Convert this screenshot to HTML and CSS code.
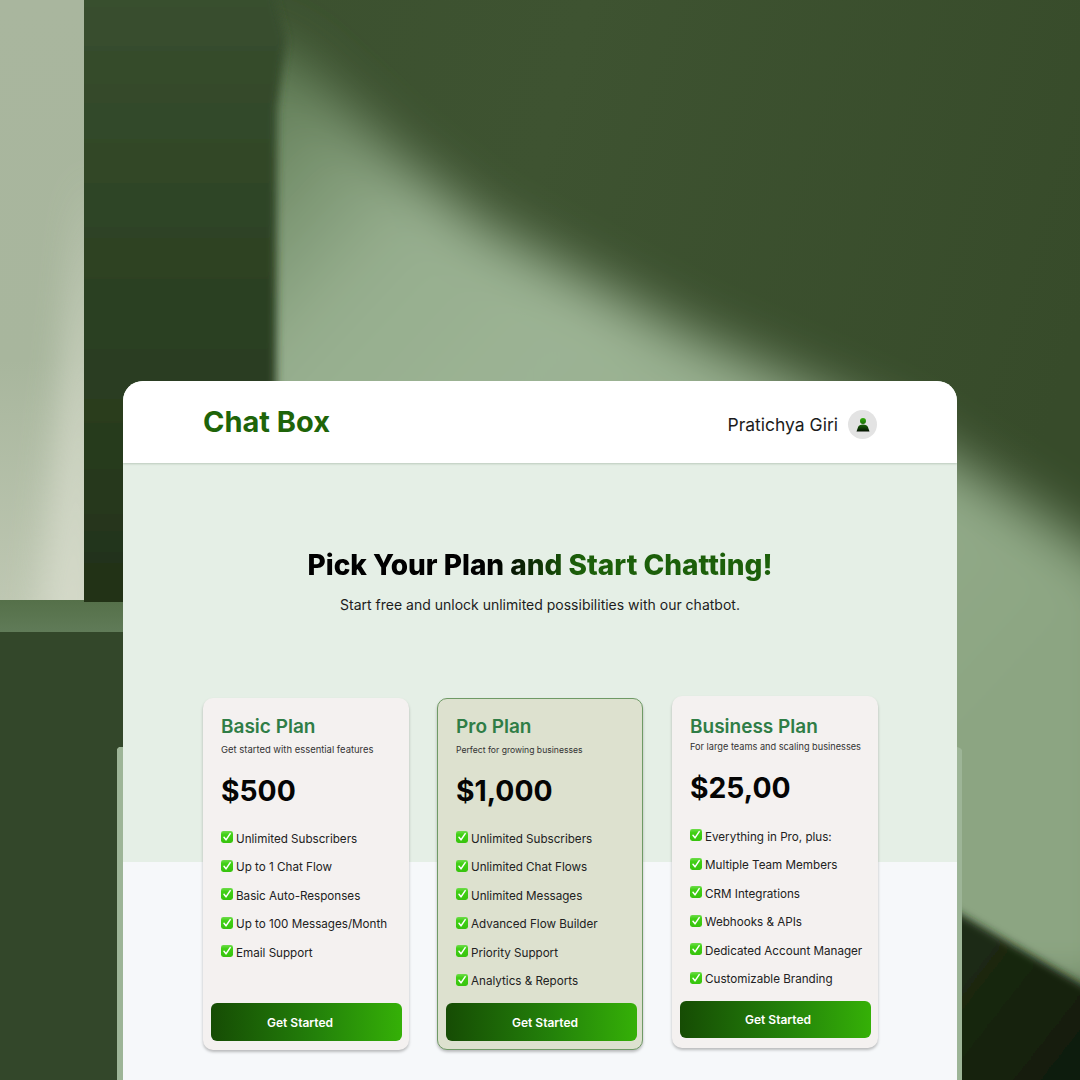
FILE: index.html
```html
<!DOCTYPE html>
<html lang="en">
<head>
  <meta charset="UTF-8" />
  <meta name="viewport" content="width=device-width, initial-scale=1.0"/>
  <title>Chat Box</title>
  <link rel="stylesheet" href="styles.css">
</head>
<body>

<svg class="backdrop" viewBox="0 0 1080 1080" aria-hidden="true">
  <defs>
    <linearGradient id="base" x1="0" y1="0" x2="1" y2="0.3">
      <stop offset="0" stop-color="#3a4f2e"/>
      <stop offset="0.5" stop-color="#3e5331"/>
      <stop offset="1" stop-color="#374b2a"/>
    </linearGradient>
    <linearGradient id="beam" gradientUnits="userSpaceOnUse" x1="290" y1="40" x2="1000" y2="700">
      <stop offset="0" stop-color="#5f7b54"/>
      <stop offset="0.22" stop-color="#96ae8e"/>
      <stop offset="0.42" stop-color="#9cb394"/>
      <stop offset="1" stop-color="#8ca582"/>
    </linearGradient>
    <linearGradient id="shade" x1="0" y1="0" x2="0" y2="1">
      <stop offset="0" stop-color="#3a5030"/>
      <stop offset="0.3" stop-color="#2f4526"/>
      <stop offset="0.7" stop-color="#27391d"/>
      <stop offset="1" stop-color="#1c2814"/>
    </linearGradient>
    <linearGradient id="wall" x1="0" y1="0" x2="0" y2="1">
      <stop offset="0" stop-color="#a9b69e"/>
      <stop offset="0.6" stop-color="#a8b69d"/>
      <stop offset="1" stop-color="#bec7b2"/>
    </linearGradient>
    <linearGradient id="band" x1="0" y1="0" x2="0" y2="1">
      <stop offset="0" stop-color="#557049"/>
      <stop offset="1" stop-color="#607b58"/>
    </linearGradient>
    <linearGradient id="corner" x1="0" y1="0" x2="1" y2="1">
      <stop offset="0" stop-color="#1f2e15"/>
      <stop offset="1" stop-color="#0d1808"/>
    </linearGradient>
    <clipPath id="wall-clip"><rect width="84" height="600"/></clipPath>
    <filter id="soft-lg" x="-20%" y="-20%" width="140%" height="140%"><feGaussianBlur stdDeviation="27"/></filter>
    <filter id="soft-md" x="-100%" y="-30%" width="300%" height="160%"><feGaussianBlur stdDeviation="18"/></filter>
    <filter id="soft-sm" x="-20%" y="-20%" width="140%" height="140%"><feGaussianBlur stdDeviation="4"/></filter>
  </defs>
  <rect width="1080" height="1080" fill="url(#base)"/>
  <polygon points="220,700 220,30 286,50 400,160 482,225 689,335 895,425 1033,510 1130,575 1130,1000 220,1000" fill="url(#beam)" filter="url(#soft-lg)"/>
  <polygon points="60,-20 270,-20 286,40 277,110 275,700 60,700" fill="url(#shade)" filter="url(#soft-sm)"/>
  <polygon points="950,908 1100,995 1100,1100 950,1100" fill="url(#corner)" filter="url(#soft-sm)"/>
  <polygon points="0,600 84,600 84,602 123,602 123,632 0,632" fill="url(#band)"/>
  <rect x="0" y="632" width="123" height="448" fill="#33472a"/>
  <g clip-path="url(#wall-clip)">
    <rect width="84" height="600" fill="url(#wall)"/>
    <polygon points="90,170 105,640 35,640" fill="#dadecf" opacity="0.8" filter="url(#soft-md)"/>
  </g>
  <polygon points="117,749 119,747 123,747 123,1080 117,1080" fill="#9db597"/>
  <polygon points="957,747 960,748 962,750 962,1080 957,1080" fill="#9db597"/>
</svg>

<div class="window">
  <header class="topbar">
    <div class="logo">Chat Box</div>
    <div class="user">
      <span class="user-name">Pratichya Giri</span>
      <span class="avatar">
        <svg width="14" height="15" viewBox="0 0 14 15">
          <defs>
            <linearGradient id="person" x1="0" y1="0" x2="0" y2="1">
              <stop offset="0" stop-color="#2fae08"/>
              <stop offset="0.45" stop-color="#1c6b08"/>
              <stop offset="1" stop-color="#031000"/>
            </linearGradient>
          </defs>
          <path fill="url(#person)" d="M7 1a3 3 0 1 1 0 6 3 3 0 0 1 0-6zM7 7.600c2.600 0 4.400 1 5 2.600l1.500 4.300H.5L2 10.200c.6-1.600 2.400-2.600 5-2.600z"/>
        </svg>
      </span>
    </div>
  </header>

  <main class="content">
    <h1 class="hero-title">Pick Your Plan and Start Chatting!</h1>
    <p class="hero-sub">Start free and unlock unlimited possibilities with our chatbot.</p>

    <svg width="0" height="0" class="sprite" aria-hidden="true">
      <defs>
        <linearGradient id="tick-fill" x1="0" y1="0" x2="0" y2="1">
          <stop offset="0" stop-color="#6fdc4c"/>
          <stop offset="0.3" stop-color="#41d015"/>
          <stop offset="1" stop-color="#37c30e"/>
        </linearGradient>
      </defs>
      <symbol id="check" viewBox="0 0 12 12">
        <rect width="12" height="12" rx="2.400" fill="url(#tick-fill)"/>
        <path d="M3 6.300 5 8.900 9.200 2.600" fill="none" stroke="#fff" stroke-width="1.500" stroke-linecap="round" stroke-linejoin="round"/>
      </symbol>
    </svg>

    <div class="plans">
      <section class="plan plan-basic">
        <h2 class="plan-name">Basic Plan</h2>
        <p class="plan-desc">Get started with essential features</p>
        <div class="plan-price">$500</div>
        <ul class="features">
          <li><svg class="tick"><use href="#check"/></svg>Unlimited Subscribers</li>
          <li><svg class="tick"><use href="#check"/></svg>Up to 1 Chat Flow</li>
          <li><svg class="tick"><use href="#check"/></svg>Basic Auto-Responses</li>
          <li><svg class="tick"><use href="#check"/></svg>Up to 100 Messages/Month</li>
          <li><svg class="tick"><use href="#check"/></svg>Email Support</li>
        </ul>
        <button class="cta">Get Started</button>
      </section>

      <section class="plan plan-pro">
        <h2 class="plan-name">Pro Plan</h2>
        <p class="plan-desc">Perfect for growing businesses</p>
        <div class="plan-price">$1,000</div>
        <ul class="features">
          <li><svg class="tick"><use href="#check"/></svg>Unlimited Subscribers</li>
          <li><svg class="tick"><use href="#check"/></svg>Unlimited Chat Flows</li>
          <li><svg class="tick"><use href="#check"/></svg>Unlimited Messages</li>
          <li><svg class="tick"><use href="#check"/></svg>Advanced Flow Builder</li>
          <li><svg class="tick"><use href="#check"/></svg>Priority Support</li>
          <li><svg class="tick"><use href="#check"/></svg>Analytics &amp; Reports</li>
        </ul>
        <button class="cta">Get Started</button>
      </section>

      <section class="plan plan-business">
        <h2 class="plan-name">Business Plan</h2>
        <p class="plan-desc">For large teams and scaling businesses</p>
        <div class="plan-price">$25,00</div>
        <ul class="features">
          <li><svg class="tick"><use href="#check"/></svg>Everything in Pro, plus:</li>
          <li><svg class="tick"><use href="#check"/></svg>Multiple Team Members</li>
          <li><svg class="tick"><use href="#check"/></svg>CRM Integrations</li>
          <li><svg class="tick"><use href="#check"/></svg>Webhooks &amp; APIs</li>
          <li><svg class="tick"><use href="#check"/></svg>Dedicated Account Manager</li>
          <li><svg class="tick"><use href="#check"/></svg>Customizable Branding</li>
        </ul>
        <button class="cta">Get Started</button>
      </section>
    </div>
  </main>
</div>

</body>
</html>
```

FILE: styles.css
```css
* { box-sizing: border-box; }
html, body {
  margin: 0;
  padding: 0;
  height: 1080px;
  overflow: hidden;
}
body {
  position: relative;
  font-family: Inter, "Liberation Sans", sans-serif;
  background: #34482a;
  color: #111;
  padding: 381px 123px 0;
}
.backdrop {
  position: absolute;
  left: 0;
  top: 0;
  width: 1080px;
  height: 1080px;
}
.sprite { position: absolute; }

.window {
  position: relative;
  width: 834px;
  height: 699px;
  border-radius: 20px 20px 0 0;
  overflow: hidden;
  background: linear-gradient(#e5efe6 481px, #f6f8fa 481px);
}
.topbar {
  height: 82px;
  padding: 0 80px;
  display: flex;
  align-items: center;
  justify-content: space-between;
  background: white;
  box-shadow: 0 1px 2px rgba(60,90,60,0.25);
}
.logo {
  padding-bottom: 1px;
  font-size: 29px;
  font-weight: 700;
  color: #1e6409;
}
.user {
  display: flex;
  align-items: center;
  gap: 10px;
  padding-top: 5px;
}
.user-name {
  font-size: 17.500px;
  color: #1c1c1c;
}
.avatar {
  width: 29px;
  height: 29px;
  border-radius: 50%;
  background: #e3e3e3;
  display: flex;
  align-items: center;
  justify-content: center;
}

.content { padding: 84px 80px 0; }
.hero-title {
  width: fit-content;
  margin: 0 auto;
  font-size: 28px;
  line-height: 36px;
  font-weight: 800;
  text-align: center;
  white-space: nowrap;
  background: linear-gradient(90deg, #000 0%, #000 40%, #1c5f0a 58%, #1c5f0a 100%);
  -webkit-background-clip: text;
  background-clip: text;
  color: transparent;
}
.hero-sub {
  margin: 12px 0 0;
  font-size: 14px;
  line-height: 20px;
  text-align: center;
  color: #1c1c1c;
}

.plans {
  display: flex;
  align-items: flex-start;
  gap: 28px;
  margin-top: 83px;
}
.plan {
  flex: none;
  width: 206px;
  height: 352px;
  padding: 17px 7px 9px 8px;
  display: flex;
  flex-direction: column;
  background: #f4f1f0;
  border-radius: 10px;
  box-shadow: 0 2px 3px rgba(0,0,0,0.25);
}
.plan-pro {
  padding: 16px 5px 8px 8px;
  background: #dde1cf;
  border: 1px solid #6f9a65;
}
.plan-business {
  margin: -2px 0 0 1px;
  padding-top: 19px;
}
.plan-name {
  margin: 0 0 0 10px;
  font-size: 19px;
  line-height: 24px;
  font-weight: 600;
  color: #2f7d46;
}
.plan-desc {
  margin: 5px 0 0 10px;
  font-size: 9.450px;
  line-height: 12px;
  color: #333;
  white-space: nowrap;
}
.plan-pro .plan-desc { font-size: 8.600px; }
.plan-business .plan-desc { margin-top: 2px; font-size: 9.200px; }
.plan-price {
  margin: 17px 0 0 10px;
  font-size: 28.300px;
  line-height: 36px;
  font-weight: 700;
  color: #050505;
}
.features {
  list-style: none;
  margin: 22.500px 0 0 10px;
  padding: 0;
  display: flex;
  flex-direction: column;
  gap: 14.500px;
}
.plan-business .features { margin-top: 23.500px; }
.features li {
  display: flex;
  align-items: center;
  font-size: 11.650px;
  line-height: 14px;
  color: #222;
  white-space: nowrap;
}
.tick {
  width: 12px;
  height: 12px;
  margin: -3px 3px 0 0;
  flex: none;
}
.cta {
  margin-top: auto;
  height: 38px;
  border: none;
  border-radius: 6px;
  background: linear-gradient(90deg, #164c04 0%, #23810a 55%, #35b007 100%);
  color: white;
  font-family: inherit;
  font-size: 12px;
  font-weight: 600;
  cursor: pointer;
}
.plan-basic .cta { padding: 0 13px 0 0; }
.plan-pro .cta { padding: 0 0 0 7px; }
.plan-business .cta { padding: 0 0 0 5px; height: 37px; margin-bottom: 1px; }
```
